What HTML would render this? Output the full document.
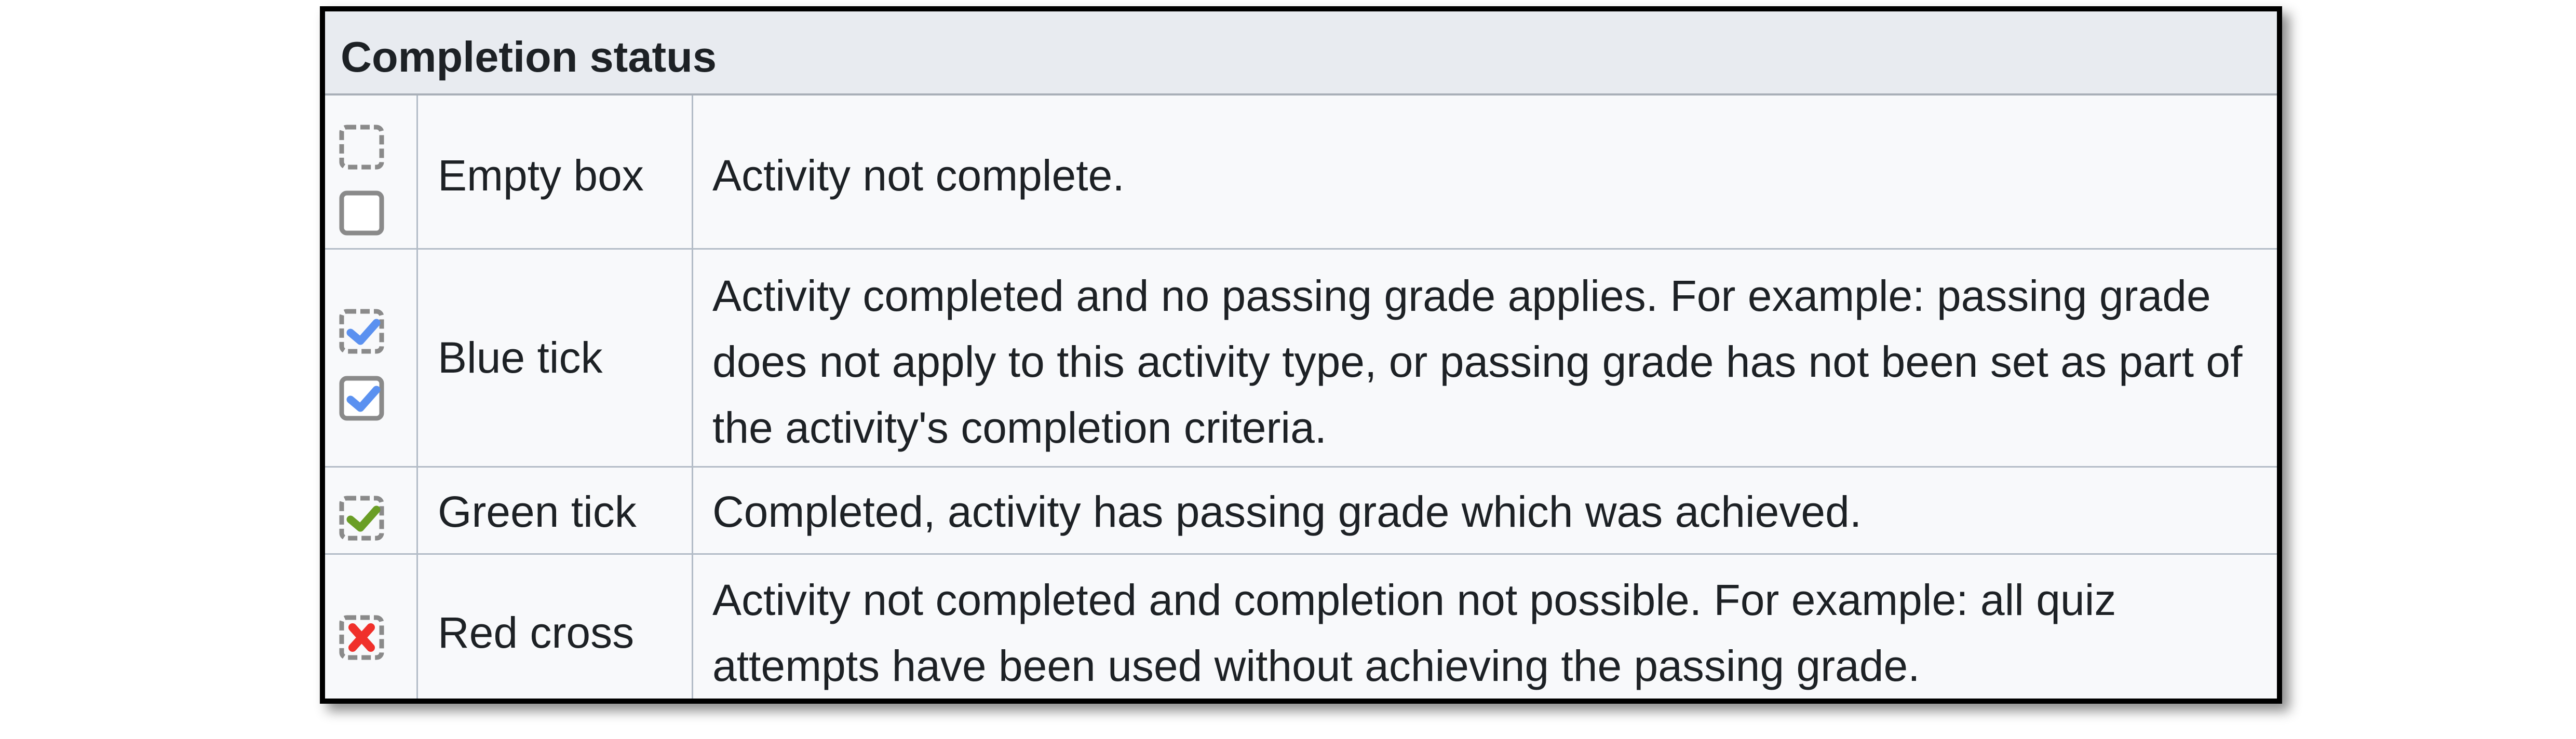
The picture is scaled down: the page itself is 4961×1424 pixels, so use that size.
<!DOCTYPE html>
<html><head><meta charset="utf-8"><style>
html,body{margin:0;padding:0;background:#fff;}
body{width:4961px;height:1424px;position:relative;overflow:hidden;font-family:"Liberation Sans",sans-serif;color:#1d2125;}
.tbl{position:absolute;left:616px;top:12px;width:3759px;height:1324px;border:10px solid #000;background:#f8f9fb;box-shadow:14px 14px 22px rgba(0,0,0,0.45);}
.hdr{position:absolute;left:0;top:0;width:100%;height:158px;background:#e8ebf0;border-bottom:4px solid #a9afb8;}
.hdr span{position:absolute;left:30px;top:38px;font-weight:bold;font-size:83px;line-height:100px;}
.hl{position:absolute;left:0;width:100%;height:3px;background:#b3bcc7;}
.vl{position:absolute;top:162px;bottom:0;width:3px;background:#b3bcc7;}
.cell{position:absolute;display:flex;flex-direction:column;justify-content:center;font-size:84px;line-height:127px;white-space:nowrap;}
svg{position:absolute;}
</style></head><body>
<div class="tbl">
 <div class="hdr"><span>Completion status</span></div>
 <div class="hl" style="top:456px"></div>
 <div class="hl" style="top:876px"></div>
 <div class="hl" style="top:1044px"></div>
 <div class="vl" style="left:176px"></div>
 <div class="vl" style="left:706px"></div>

 <div class="cell" style="left:217px;top:170px;height:292px">Empty box</div>
 <div class="cell" style="left:746px;top:170px;height:292px">Activity not complete.</div>

 <div class="cell" style="left:217px;top:459px;height:417px">Blue tick</div>
 <div class="cell" style="left:746px;top:467px;height:417px">Activity completed and no passing grade applies. For example: passing grade<br>does not apply to this activity type, or passing grade has not been set as part of<br>the activity's completion criteria.</div>

 <div class="cell" style="left:217px;top:882px;height:165px">Green tick</div>
 <div class="cell" style="left:746px;top:882px;height:165px">Completed, activity has passing grade which was achieved.</div>

 <div class="cell" style="left:217px;top:1071px;height:253px">Red cross</div>
 <div class="cell" style="left:746px;top:1071px;height:253px">Activity not completed and completion not possible. For example: all quiz<br>attempts have been used without achieving the passing grade.</div>
</div>

<svg style="left:653px;top:240px" width="87" height="87" viewBox="0 0 87 87"><rect x="5" y="5" width="77" height="77" rx="10" fill="none" stroke="#8a8a8a" stroke-width="9" stroke-dasharray="18 8"/></svg>
<svg style="left:653px;top:367px" width="87" height="87" viewBox="0 0 87 87"><rect x="5" y="5" width="77" height="77" rx="10" fill="#fff" stroke="#8a8a8a" stroke-width="9"/></svg>

<svg style="left:653px;top:595px" width="87" height="87" viewBox="0 0 87 87"><rect x="5" y="5" width="77" height="77" rx="10" fill="none" stroke="#8a8a8a" stroke-width="9" stroke-dasharray="18 8"/><path d="M22 46 L41 62 L72 27" fill="none" stroke="#5b91f0" stroke-width="15" stroke-linecap="round" stroke-linejoin="round"/></svg>
<svg style="left:653px;top:724px" width="87" height="87" viewBox="0 0 87 87"><rect x="5" y="5" width="77" height="77" rx="10" fill="#fff" stroke="#8a8a8a" stroke-width="9"/><path d="M22 46 L41 62 L72 27" fill="none" stroke="#5b91f0" stroke-width="15" stroke-linecap="round" stroke-linejoin="round"/></svg>

<svg style="left:653px;top:955px" width="87" height="87" viewBox="0 0 87 87"><rect x="5" y="5" width="77" height="77" rx="10" fill="none" stroke="#8a8a8a" stroke-width="9" stroke-dasharray="18 8"/><path d="M22 46 L41 62 L72 27" fill="none" stroke="#6a9e25" stroke-width="15" stroke-linecap="round" stroke-linejoin="round"/></svg>

<svg style="left:653px;top:1185px" width="87" height="87" viewBox="0 0 87 87"><rect x="5" y="5" width="77" height="77" rx="10" fill="none" stroke="#8a8a8a" stroke-width="9" stroke-dasharray="18 8"/><path d="M26 24 L61 63 M61 24 L26 63" fill="none" stroke="#f0302b" stroke-width="16" stroke-linecap="round"/></svg>
</body></html>
